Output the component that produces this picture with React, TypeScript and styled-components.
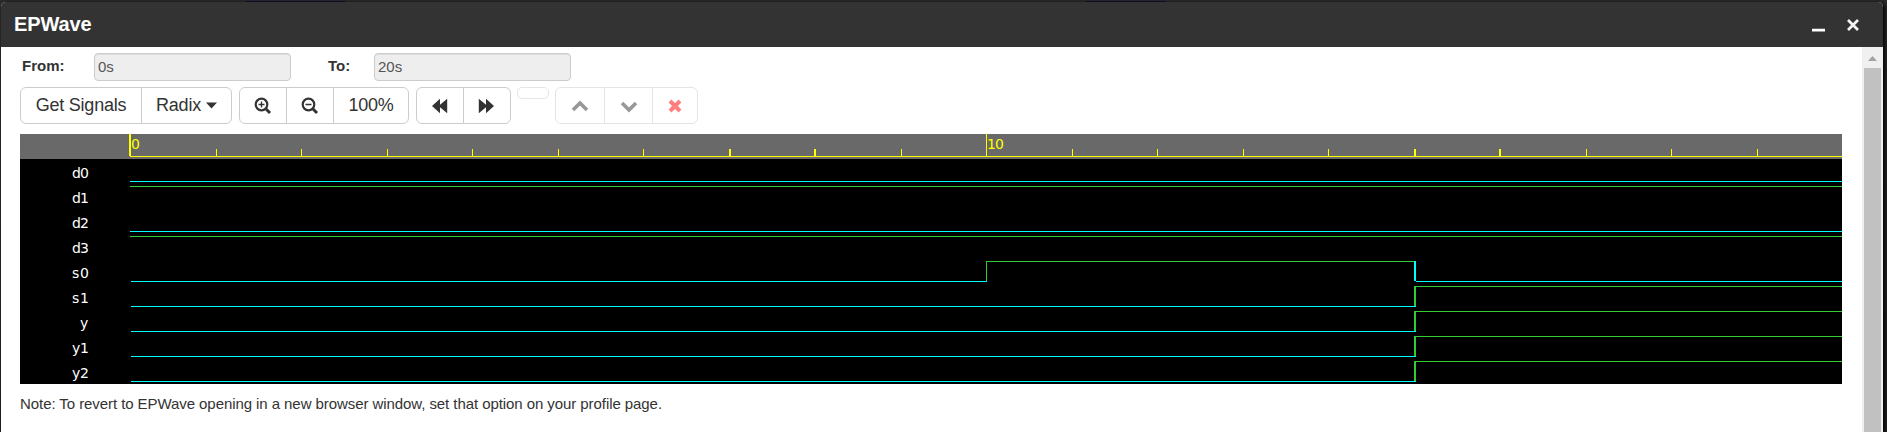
import React from "react";
import styled, { createGlobalStyle } from "styled-components";

const Global = createGlobalStyle`
  * { box-sizing: border-box; }
  body { margin: 0; background: #2b2b2b; overflow: hidden; font: 14px/20px "Liberation Sans", Arial, sans-serif; color: #333; }
`;
const Page = styled.div`
  height: 432px;
  padding: 0 4px 0 1px;
  background: linear-gradient(#2c2c2c, #222);
`;
const Backdrop = styled.div`
  height: 2px;
  padding: 1px 0 0 244px;
  display: flex;
  gap: 740px;
`;
const BackdropField = styled.div<{ $width: number }>`
  width: ${p => p.$width}px;
  height: 1px;
  background: #0d0d2c;
`;
const Dialog = styled.div`
  height: 430px;
  display: flex;
  flex-direction: column;
  background: #fff;
  border-radius: 5px 5px 0 0;
  overflow: hidden;
  box-shadow: 2px 1px 4px #000;
`;
const TitleBar = styled.header`
  height: 45px;
  flex: none;
  display: flex;
  align-items: center;
  padding: 0 24px 0 13px;
  background: #333;
  color: #fff;
`;
const Title = styled.h1`
  margin: 0;
  flex: 1;
  font-size: 20px;
  line-height: 42px;
  padding-bottom: 2px;
  letter-spacing: -0.1px;
`;
const WindowButtons = styled.div`
  display: flex;
  gap: 22px;
  align-items: center;
`;
const Body = styled.div`
  flex: 1;
  min-height: 0;
  display: flex;
`;
const Content = styled.main`
  flex: 1;
  min-width: 0;
  padding: 6px 20px 0 19px;
`;
const Scrollbar = styled.div`
  width: 21px;
  padding: 0 2px;
  background: #f0f0f0;
  display: flex;
  flex-direction: column;
  align-items: stretch;
`;
const ScrollArrow = styled.svg`
  height: 21px;
  width: 17px;
  flex: none;
`;
const Thumb = styled.div`
  flex: 1;
  background: #c1c1c1;
`;
const RangeRow = styled.div`
  display: flex;
  height: 34px;
`;
const RangeLabel = styled.label<{ $width: number }>`
  width: ${p => p.$width}px;
  padding: 3px 0 0 2px;
  font-weight: bold;
  font-size: 15px;
`;
const RangeInput = styled.input`
  width: 197px;
  height: 28px;
  padding: 0 4px 1px 3px;
  margin-right: 35px;
  border: 1px solid #ccc;
  border-radius: 4px;
  background: #eee;
  box-shadow: inset 0 1px 1px rgba(0, 0, 0, 0.075);
  color: #555;
  font: 15px "Liberation Sans", Arial, sans-serif;
`;
const Toolbar = styled.div`
  display: flex;
  align-items: flex-start;
  gap: 7px;
  height: 47px;
`;
const Group = styled.div<{ $disabled?: boolean }>`
  display: flex;
  margin-left: ${p => (p.$disabled ? -1 : 0)}px;
  opacity: ${p => (p.$disabled ? 0.5 : 1)};
`;
const Button = styled.button<{ $width: number; $short?: boolean }>`
  width: ${p => p.$width}px;
  height: ${p => (p.$short ? 12 : 37)}px;
  padding: 0;
  display: flex;
  align-items: center;
  justify-content: center;
  gap: 5px;
  border: 1px solid #ccc;
  background: #fff;
  color: #333;
  font: 18px "Liberation Sans", Arial, sans-serif;
  letter-spacing: -0.22px;
  & + & { margin-left: -1px; }
  &:first-child { border-top-left-radius: ${p => (p.$short ? 5 : 6)}px; border-bottom-left-radius: ${p => (p.$short ? 5 : 6)}px; }
  &:last-child { border-top-right-radius: ${p => (p.$short ? 5 : 6)}px; border-bottom-right-radius: ${p => (p.$short ? 5 : 6)}px; }
`;
const Viewer = styled.section`
  width: 1822px;
  height: 250px;
  background: #000;
`;
const Wave = styled.svg`
  display: block;
  font: 14px "DejaVu Sans", sans-serif;
`;
const Note = styled.p`
  margin: 10px 0 0;
  font-size: 15px;
  letter-spacing: -0.07px;
`;

const CHAR = 8;
const LOW = "#00ffff";
const HIGH = "#32cd32";

/* Left pixel and thickness of the mark for each time unit */
const ticks: [number, number][] = [
  [109, 2], [196, 1], [281, 1], [367, 1], [452, 1], [538, 1], [623, 1], [709, 2], [794, 2], [881, 1],
  [966, 1], [1052, 1], [1137, 1], [1223, 1], [1308, 1], [1394, 2], [1479, 2], [1566, 1], [1651, 1], [1737, 1],
];
const END = 1822;
const edge = (t: number) => (t >= ticks.length ? END : ticks[t][0] + (ticks[t][1] === 2 ? 2 : 1));

type Segment = { from: number; to: number; high: boolean };
const signals: { name: string; segments: Segment[] }[] = [
  { name: "d0", segments: [{ from: 0, to: 20, high: false }] },
  { name: "d1", segments: [{ from: 0, to: 20, high: true }] },
  { name: "d2", segments: [{ from: 0, to: 20, high: false }] },
  { name: "d3", segments: [{ from: 0, to: 20, high: true }] },
  { name: "s0", segments: [{ from: 0, to: 10, high: false }, { from: 10, to: 15, high: true }, { from: 15, to: 20, high: false }] },
  ...["s1", "y", "y1", "y2"].map(name => ({
    name,
    segments: [{ from: 0, to: 15, high: false }, { from: 15, to: 20, high: true }],
  })),
];

const cells = (text: string, start: number) => text.split("").map((_, i) => start + i * CHAR).join(" ");

function Ruler() {
  return (
    <g>
      <rect width="1822" height="25" fill="#696969" />
      <rect x="110" y="22" width="1712" height="1" fill="#ff0" />
      {ticks.map(([x, w], i) => (
        <rect key={i} x={x} y={i % 10 ? 15 : 0} width={w} height={i % 10 ? 7 : 22} fill="#ff0" />
      ))}
      <text x={111} y="15" fill="#ff0">0</text>
      <text x={cells("10", 967)} y="15" fill="#ff0">10</text>
    </g>
  );
}

function SignalRow({ index, name, segments }: { index: number; name: string; segments: Segment[] }) {
  const top = 25 + index * 25;
  return (
    <g>
      <text x={cells(name, 68 - name.length * CHAR)} y={top + 19} fill="#fff">{name}</text>
      {segments.map((s, i) => {
        const flat = segments.length === 1;
        const start = flat ? 110 : edge(s.from);
        const [x, w] = ticks[s.from];
        return (
          <g key={s.from} fill={s.high ? HIGH : LOW}>
            <rect x={start} y={top + (s.high ? 2 : 22)} width={edge(s.to) - start} height="1" />
            {i > 0 && <rect x={x} y={top + 2} width={w} height="20" />}
          </g>
        );
      })}
    </g>
  );
}

const Magnifier = ({ plus }: { plus?: boolean }) => (
  <svg width="18" height="18" viewBox="0 0 18 18" fill="none" stroke="#333">
    <circle cx="7.5" cy="7.5" r="5.8" strokeWidth="2.2" />
    <path d="M11.8 11.8L16 16" strokeWidth="3" />
    <path d={plus ? "M4.5 7.5H10.5M7.5 4.5V10.5" : "M4.5 7.5H10.5"} strokeWidth="1.4" />
  </svg>
);
const Skip = ({ forward }: { forward?: boolean }) => (
  <svg width="18" height="16" viewBox="0 0 18 16" fill="#333">
    <path transform={forward ? "translate(17 0) scale(-1 1)" : undefined} d="M1 8L9 .8V6.8L16.2 .8V15.2L9 9.2V15.2Z" />
  </svg>
);
const Chevron = ({ down }: { down?: boolean }) => (
  <svg width="18" height="18" viewBox="0 0 18 18" fill="none" stroke="#333" strokeWidth="3.6">
    <path d={down ? "M2 6L9 13L16 6" : "M2 13L9 6L16 13"} />
  </svg>
);

export default function App() {
  return (
    <Page>
      <Global />
      <Backdrop>
        <BackdropField $width={100} />
        <BackdropField $width={81} />
      </Backdrop>
      <Dialog>
        <TitleBar>
          <Title>EPWave</Title>
          <WindowButtons>
            <svg width="13" height="15" viewBox="0 0 13 15"><path d="M0 13.2H13" stroke="#fff" strokeWidth="2.8" /></svg>
            <svg width="12" height="12" viewBox="0 0 12 12"><path d="M1 1L11 11M11 1L1 11" stroke="#f4f4f4" strokeWidth="2.8" /></svg>
          </WindowButtons>
        </TitleBar>
        <Body>
          <Content>
            <RangeRow>
              <RangeLabel $width={74}>From:</RangeLabel>
              <RangeInput readOnly value="0s" />
              <RangeLabel $width={48}>To:</RangeLabel>
              <RangeInput readOnly value="20s" />
            </RangeRow>
            <Toolbar>
              <Group>
                <Button $width={122}>Get Signals</Button>
                <Button $width={91}>Radix<svg width="11" height="7" viewBox="0 0 11 7"><path d="M0 .5H11L5.5 6.5Z" fill="#333" /></svg></Button>
              </Group>
              <Group>
                <Button $width={48}><Magnifier plus /></Button>
                <Button $width={48}><Magnifier /></Button>
                <Button $width={76}>100%</Button>
              </Group>
              <Group>
                <Button $width={48}><Skip /></Button>
                <Button $width={48}><Skip forward /></Button>
              </Group>
              <Group $disabled><Button $width={32} $short /></Group>
              <Group $disabled>
                <Button $width={50}><Chevron /></Button>
                <Button $width={49}><Chevron down /></Button>
                <Button $width={46}>
                  <svg width="14" height="14" viewBox="0 0 14 14"><path d="M2 2L12 12M12 2L2 12" stroke="#f00" strokeWidth="4" /></svg>
                </Button>
              </Group>
            </Toolbar>
            <Viewer>
              <Wave width="1822" height="250" shapeRendering="crispEdges">
                <Ruler />
                {signals.map((s, i) => <SignalRow key={s.name} index={i} {...s} />)}
              </Wave>
            </Viewer>
            <Note>Note: To revert to EPWave opening in a new browser window, set that option on your profile page.</Note>
          </Content>
          <Scrollbar>
            <ScrollArrow viewBox="0 0 17 21"><path d="M4 14L8.5 9L13 14Z" fill="#a3a3a3" /></ScrollArrow>
            <Thumb />
          </Scrollbar>
        </Body>
      </Dialog>
    </Page>
  );
}
